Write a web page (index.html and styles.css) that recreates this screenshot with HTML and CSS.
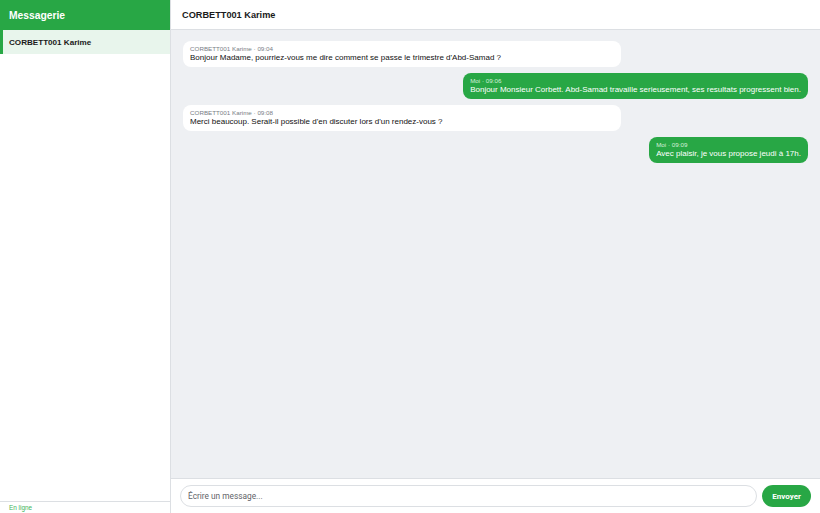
FILE: index.html
```html
<!DOCTYPE html>
<html lang="fr">
<head>
    <meta charset="UTF-8">
    <title>Messagerie</title>
    <link rel="stylesheet" href="styles.css">
</head>
<body>
    <div class="app">
        <aside class="sidebar">
            <div class="sidebar-header">Messagerie</div>
            <ul class="contacts">
                <li class="contact active">CORBETT001 Karime</li>
            </ul>
            <div class="sidebar-footer">En ligne</div>
        </aside>

        <main class="chat">
            <div class="chat-header">CORBETT001 Karime</div>

            <div class="messages">
                <div class="bubble incoming">
                    <div class="meta">CORBETT001 Karime · 09:04</div>
                    <div class="text">Bonjour Madame, pourriez-vous me dire comment se passe le trimestre d'Abd-Samad ?</div>
                </div>
                <div class="bubble outgoing">
                    <div class="meta">Moi · 09:06</div>
                    <div class="text">Bonjour Monsieur Corbett. Abd-Samad travaille serieusement, ses resultats progressent bien.</div>
                </div>
                <div class="bubble incoming">
                    <div class="meta">CORBETT001 Karime · 09:08</div>
                    <div class="text">Merci beaucoup. Serait-il possible d'en discuter lors d'un rendez-vous ?</div>
                </div>
                <div class="bubble outgoing">
                    <div class="meta">Moi · 09:09</div>
                    <div class="text">Avec plaisir, je vous propose jeudi à 17h.</div>
                </div>
            </div>

            <form class="composer">
                <input type="text" class="composer-input" placeholder="Écrire un message...">
                <button type="button" class="send-btn">Envoyer</button>
            </form>
        </main>
    </div>
</body>
</html>
```

FILE: styles.css
```css
/* Messagerie - layout */

:root {
    --green: #28a745;
    --green-light: #e8f5ec;
    --bg: #eef0f3;
    --border: #dcdfe3;
    --dark: #1a1a1a;
    --muted: #777d85;
}

* {
    box-sizing: border-box;
}

html, body {
    height: 100%;
}

body {
    margin: 0;
    font-family: "Liberation Sans", Arial, sans-serif;
    color: var(--dark);
}

.app {
    display: flex;
    height: 100%;
}

/* Sidebar */
.sidebar {
    width: 171px;
    flex-shrink: 0;
    display: flex;
    flex-direction: column;
    border-right: 1px solid var(--border);
    background: #fff;
}

.sidebar-header {
    height: 30px;
    background: var(--green);
    color: #fff;
    font-weight: 700;
    font-size: 10.3px;
    display: flex;
    align-items: center;
    padding-left: 9px;
}

.contacts {
    list-style: none;
    margin: 0;
    padding: 0;
    flex: 1;
}

.contact {
    height: 24px;
    display: flex;
    align-items: center;
    padding-left: 6px;
    border-left: 3px solid transparent;
    font-size: 8.1px;
    font-weight: 700;
    cursor: pointer;
}

.contact.active {
    background: var(--green-light);
    border-left-color: var(--green);
}

.sidebar-footer {
    height: 12px;
    border-top: 1px solid var(--border);
    padding-left: 9px;
    font-size: 6.4px;
    color: #3fb55a;
    display: flex;
    align-items: center;
}

/* Chat area */
.chat {
    flex: 1;
    display: flex;
    flex-direction: column;
    min-width: 0;
}

.chat-header {
    height: 30px;
    border-bottom: 1px solid var(--border);
    display: flex;
    align-items: center;
    padding-left: 11px;
    font-weight: 700;
    font-size: 9.2px;
    background: #fff;
}

.messages {
    flex: 1;
    background: var(--bg);
    padding: 11px 12px;
    display: flex;
    flex-direction: column;
    gap: 6px;
    overflow-y: auto;
}

.bubble {
    max-width: 70%;
    padding: 4px 7px 4px;
    border-radius: 8px;
}

.bubble.incoming {
    align-self: flex-start;
    width: 70%;
    background: #fff;
    color: #111;
}

.bubble.outgoing {
    align-self: flex-end;
    background: var(--green);
    color: #fff;
}

.meta {
    font-size: 6.25px;
    line-height: 8px;
    color: var(--muted);
}

.outgoing .meta {
    color: #d6efdc;
}

.text {
    font-size: 8px;
    line-height: 10px;
}

/* Composer */
.composer {
    height: 35px;
    margin: 0;
    border-top: 1px solid var(--border);
    background: #fff;
    display: flex;
    align-items: center;
    gap: 5px;
    padding: 0 9px 0 9px;
}

.composer-input {
    flex: 1;
    height: 22px;
    border: 1px solid var(--border);
    border-radius: 11px;
    padding: 0 7px;
    font-family: Roboto, "Liberation Sans", sans-serif;
    font-size: 8.3px;
    color: var(--dark);
    outline: none;
}

.composer-input::placeholder {
    color: #5f6368;
}

.send-btn {
    height: 22px;
    padding: 0 10px;
    border: none;
    border-radius: 11px;
    background: var(--green);
    color: #fff;
    font-family: Roboto, "Liberation Sans", sans-serif;
    font-weight: 700;
    font-size: 8px;
    cursor: pointer;
}
```
